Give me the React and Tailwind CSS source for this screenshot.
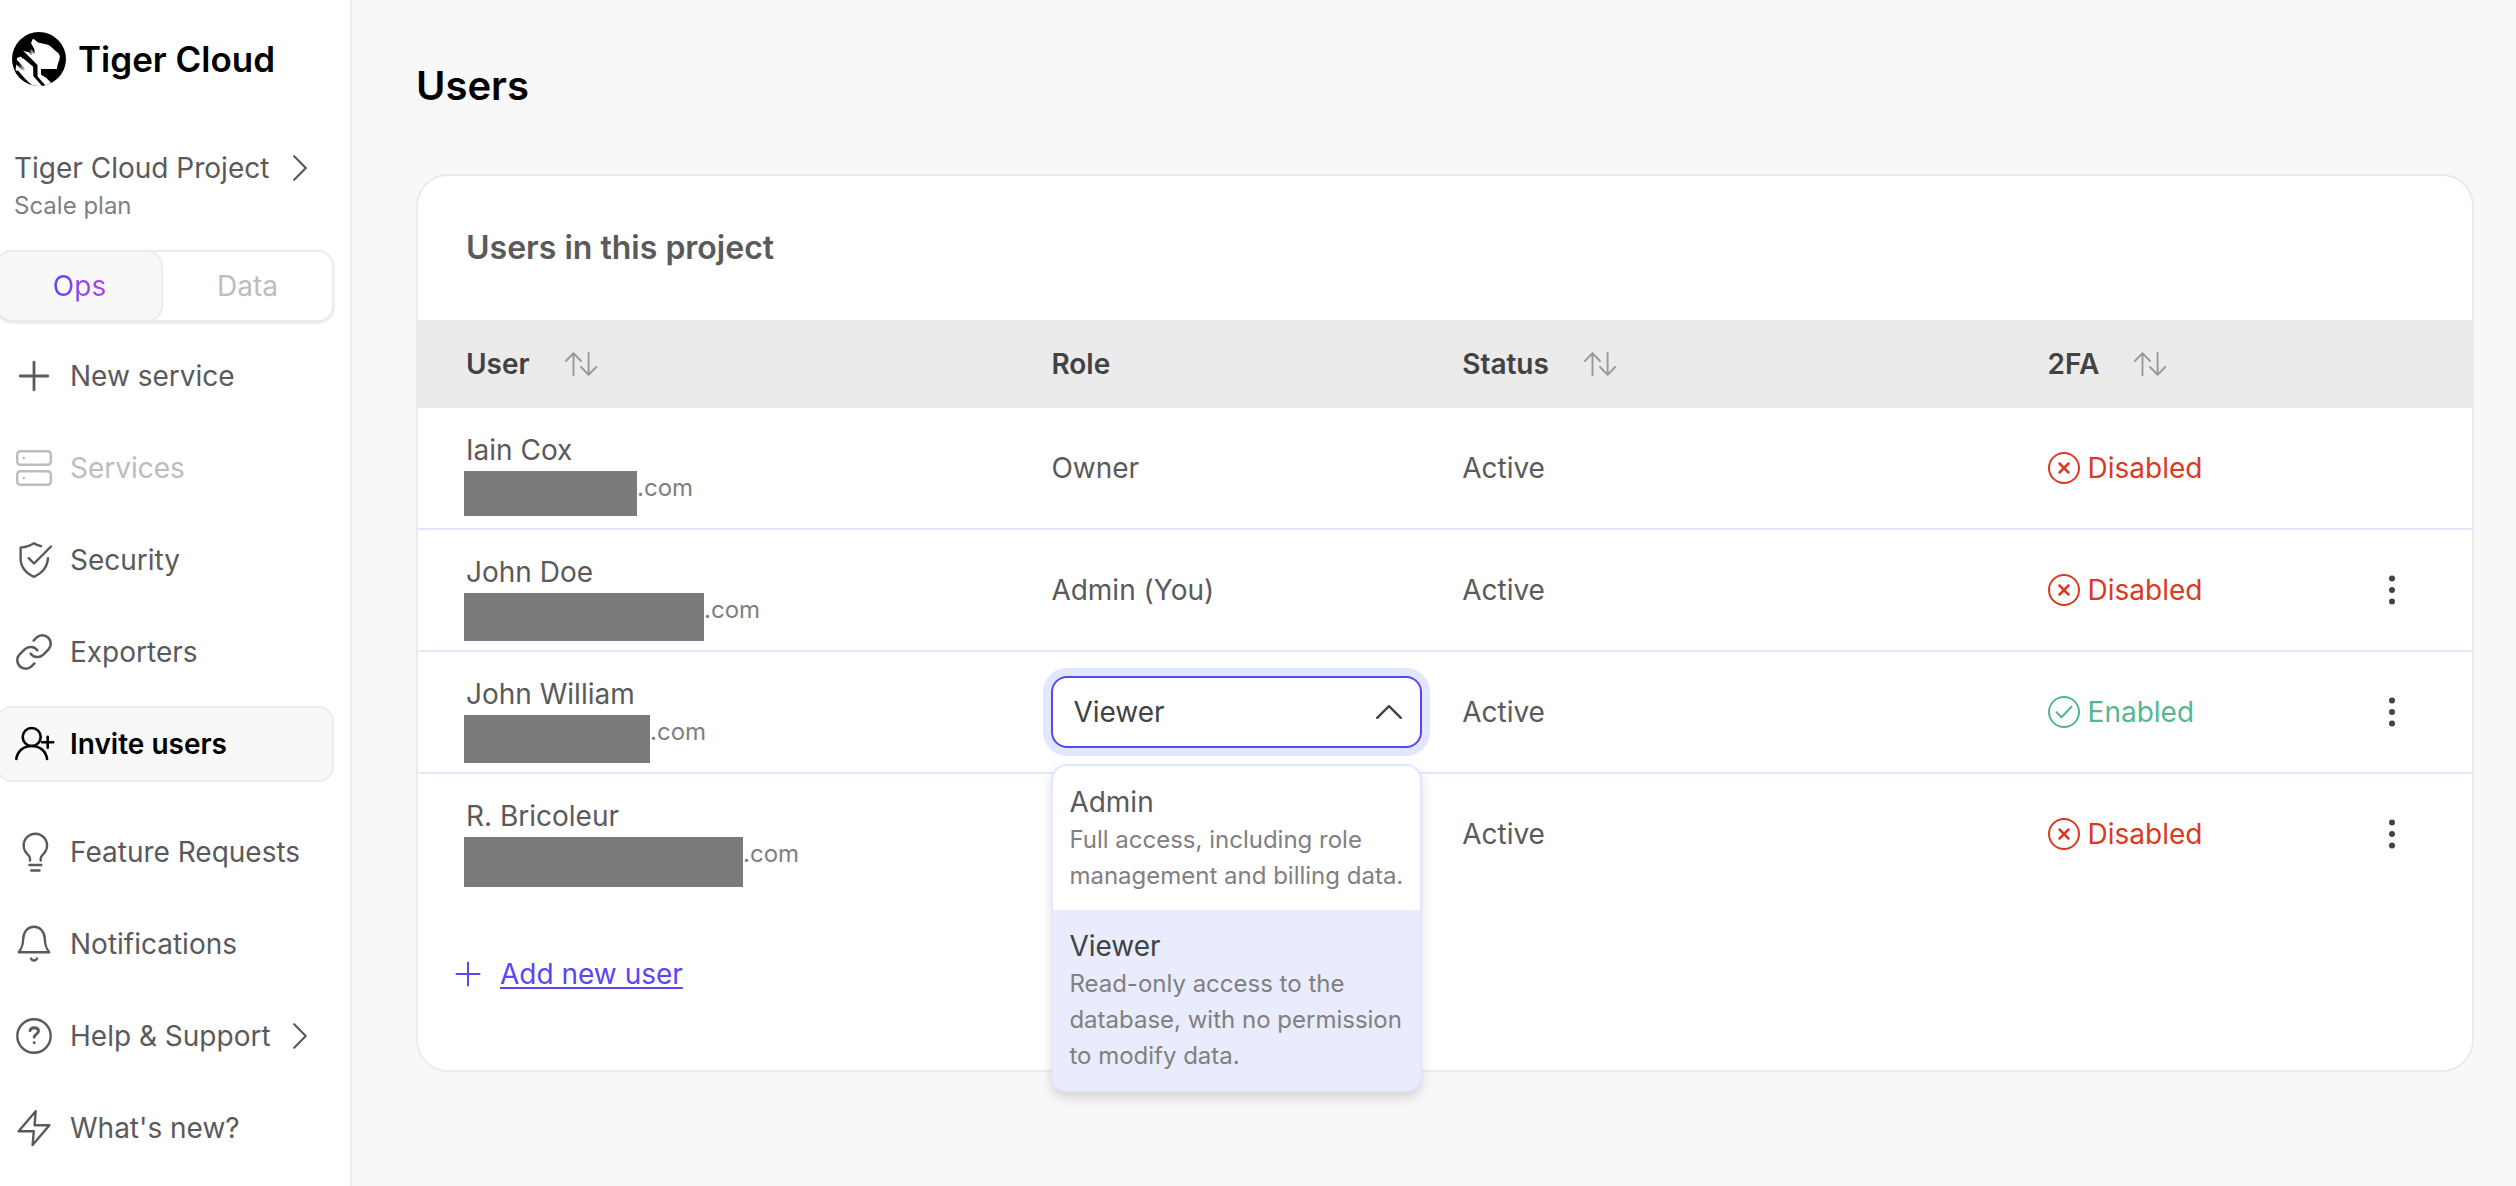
import React, { useState } from 'react';

/* ---------- icons ---------- */

const Icon = ({ children, className = 'size-9', viewBox = '0 0 36 36', strokeWidth = 2.4 }) => (
  <svg
    viewBox={viewBox}
    className={`${className} shrink-0 overflow-visible`}
    fill="none"
    stroke="currentColor"
    strokeWidth={strokeWidth}
    strokeLinecap="round"
    strokeLinejoin="round"
    aria-hidden="true"
  >
    {children}
  </svg>
);

const TigerLogo = () => (
  <svg viewBox="0 0 54 54" className="size-[54px] shrink-0" aria-hidden="true">
    <defs>
      <clipPath id="logo-clip">
        <circle cx="27" cy="27" r="27" />
      </clipPath>
      <linearGradient id="logo-fade" x1="0" y1="0" x2="1" y2="0.3">
        <stop offset="0.3" stopColor="#000" />
        <stop offset="1" stopColor="#fff" />
      </linearGradient>
    </defs>
    <g clipPath="url(#logo-clip)">
      <rect width="54" height="54" fill="#000" />
      {/* head */}
      <path d="M21 6.5L26 10.5L36 12.8C39 14 41 17 43 18.5C46 20.5 47.5 22 47.8 24.5C48 28 45.5 30.5 45 37H29V42.5C30.5 44.5 32.5 44 34.5 46L41 53L33 56L25.5 46.5V33L11 18.5L15 20C17 20 18 19 19.5 19L22.5 22V17.5L19 11Z" fill="#fff" />
      {/* neck and paws */}
      <path d="M5 26L9 24.5L21.5 35L22 44L32 56H20L4 40C3 36 5 34 5 26Z" fill="#fff" />
      <path d="M15 18.5L19.5 17L22.6 22.5L19 23Z" fill="url(#logo-fade)" />
      <path d="M4 32L5 28L15 38.5L14 41L9 37Z" fill="url(#logo-fade)" />
      <path d="M9 22L11 24.8L14 24.5L21.5 32L22.7 34V43.5L32.5 54.5" fill="none" stroke="#000" strokeWidth="2.8" />
      <path d="M2 39L6 38.5C10 43.5 15 49 21 54H10Z" fill="#000" />
    </g>
  </svg>
);

const PlusIcon = () => (
  <Icon strokeWidth={2.8}>
    <path d="M18 4.2v27.6M4.2 18h27.6" />
  </Icon>
);

const ServicesIcon = () => (
  <Icon>
    <rect x="1.2" y="1.2" width="33.6" height="13.6" rx="3" />
    <rect x="1.2" y="21.2" width="33.6" height="13.6" rx="3" />
    <path d="M7.6 8h.2M7.6 28h.2" />
  </Icon>
);

const ShieldIcon = () => (
  <Icon>
    <path d="M25 4.2C22.5 3.5 20 2.6 18 1.2C14 3.8 9.5 5 4.6 5.6V16C4.6 24.5 9.5 31 18 34.8C26.5 31 31.5 25 32 16.3" />
    <path d="M12.7 16.2L18 21.5L35 4.5" />
  </Icon>
);

const LinkIcon = () => (
  <Icon viewBox="1.3 1.3 21.4 21.4" strokeWidth={1.5}>
    <path d="M10 13a5 5 0 0 0 7.54.54l3-3a5 5 0 0 0-7.07-7.07l-1.72 1.71" />
    <path d="M14 11a5 5 0 0 0-7.54-.54l-3 3a5 5 0 0 0 7.07 7.07l1.71-1.71" />
  </Icon>
);

const InviteIcon = () => (
  <Icon strokeWidth={2.6}>
    <circle cx="15.7" cy="11" r="9" />
    <path d="M.3 33C1.5 25 7.5 20 15.7 20S29.9 25 31.1 33M31.7 10.7v11M26.2 16.2h11" />
  </Icon>
);

const BulbIcon = () => (
  <Icon>
    <path d="M14 26.5V24.5C14 22.5 12.8 21.3 11.2 19.8A11.7 11.7 0 1 1 27.5 19.8C25.9 21.3 24.7 22.5 24.7 24.5V26.5M13.4 31h11.9M15.2 36.5h8.3" />
  </Icon>
);

const BellIcon = () => (
  <Icon>
    <path d="M2.8 26.2C5.5 22.5 7 20 7.2 12.8C7.5 5.5 12 .8 18 .8S28.5 5.5 28.8 12.8C29 20 30.5 22.5 33.2 26.2ZM15 32.6C16.5 35.2 19.5 35.2 21 32.6" />
  </Icon>
);

const HelpIcon = () => (
  <Icon>
    <circle cx="18" cy="18" r="16.7" />
    <path d="M14 12.6C14.6 10.7 16 9.7 18 9.7C20.8 9.7 22.5 11.2 22.5 13.2C22.5 16 18.2 16.2 18.2 19.2M18.2 24.6v.2" strokeWidth="2.9" />
  </Icon>
);

const ZapIcon = () => (
  <Icon>
    <path d="M19.7 1.2L2.6 21.3H17.8L16.6 35L33.4 15.2H18.6Z" />
  </Icon>
);

const ChevronRight = () => (
  <Icon className="h-[26px] w-3.5" viewBox="0 0 14 26" strokeWidth={2.2}>
    <path d="M1.2 1.2L12.8 13L1.2 24.8" />
  </Icon>
);

const SortIcon = () => (
  <Icon className="h-6 w-8 text-[#999999]" viewBox="0 0 32 24" strokeWidth={1.9}>
    <path d="M.9 9L8.5 1.2L16 9M8.5 1.2V23.3M16 15L23.6 22.8L31.2 15M23.6 22.8V.9" />
  </Icon>
);

const CrossCircle = () => (
  <Icon className="size-8" viewBox="0 0 32 32" strokeWidth={2}>
    <circle cx="16" cy="16" r="15" />
    <path d="M11.5 11.5l9 9M20.5 11.5l-9 9" strokeWidth="2.5" />
  </Icon>
);

const CheckCircle = () => (
  <Icon className="size-8" viewBox="0 0 32 32" strokeWidth={2}>
    <circle cx="16" cy="16" r="15" />
    <path d="M8.5 16.3L13.5 21.3L23.5 10.8" />
  </Icon>
);

const DotsIcon = () => (
  <svg viewBox="0 0 32 32" className="size-8" fill="#424242" aria-hidden="true">
    <circle cx="16" cy="4.6" r="3" />
    <circle cx="16" cy="16" r="3" />
    <circle cx="16" cy="27.4" r="3" />
  </svg>
);

/* ---------- data ---------- */

const mainNav = [
  { label: 'New service', icon: PlusIcon },
  { label: 'Services', icon: ServicesIcon, disabled: true },
  { label: 'Security', icon: ShieldIcon },
  { label: 'Exporters', icon: LinkIcon },
  { label: 'Invite users', icon: InviteIcon, active: true },
];

const footerNav = [
  { label: 'Feature Requests', icon: BulbIcon },
  { label: 'Notifications', icon: BellIcon },
  { label: 'Help & Support', icon: HelpIcon, expandable: true },
  { label: "What's new?", icon: ZapIcon },
];

const users = [
  { name: 'Iain Cox', mask: 'w-[173px] h-[45px]', role: 'Owner', status: 'Active', twoFactor: false },
  { name: 'John Doe', mask: 'w-[240px] h-12', role: 'Admin (You)', status: 'Active', twoFactor: false, menu: true },
  { name: 'John William', mask: 'w-[186px] h-12', role: 'Viewer', status: 'Active', twoFactor: true, menu: true, editing: true },
  { name: 'R. Bricoleur', mask: 'w-[279px] h-[50px]', role: '', status: 'Active', twoFactor: false, menu: true },
];

const roles = [
  { name: 'Admin', description: 'Full access, including role management and billing data.' },
  { name: 'Viewer', description: 'Read-only access to the database, with no permission to modify data.' },
];

/* ---------- components ---------- */

const NavItem = ({ item }) => {
  const ItemIcon = item.icon;
  const tone = item.active
    ? 'border-[#ebebeb] bg-[#f8f8f8] font-semibold text-black'
    : item.disabled
      ? 'border-transparent text-[#bdbdbd]'
      : 'border-transparent text-[#5a5a5a]';

  return (
    <a href="#" className={`flex h-[76px] items-center rounded-2xl border-2 pl-[18px] pr-[25px] ${tone}`}>
      <ItemIcon />
      <span className="ml-[18px] flex-1 whitespace-nowrap">{item.label}</span>
      {item.expandable && <ChevronRight />}
    </a>
  );
};

const Sidebar = () => (
  <aside className="flex w-[352px] shrink-0 flex-col border-r-2 border-[#ebebeb] bg-white pt-8">
    <div className="flex items-center gap-3 pl-3">
      <TigerLogo />
      <span className="text-[35px] font-semibold text-black">Tiger Cloud</span>
    </div>

    <a href="#" className="mt-[62px] block pl-3.5 pr-[43px]">
      <span className="flex h-10 items-center justify-between">
        Tiger Cloud Project
        <ChevronRight />
      </span>
      <span className="block text-2xl leading-9 text-[#808080]">Scale plan</span>
    </a>

    <div className="-ml-1 mr-4 mt-[26px] flex h-[72px] rounded-2xl border-2 border-[#ebebeb] bg-white shadow-sm" role="tablist">
      <button role="tab" aria-selected="true" className="-my-0.5 -ml-0.5 w-1/2 rounded-2xl border-2 border-[#ebebeb] bg-[#f8f8f8]">
        <span className="bg-linear-to-r from-[#5b45f5] to-[#b040e8] bg-clip-text text-transparent">Ops</span>
      </button>
      <button role="tab" aria-selected="false" className="flex-1 text-[#bdbdbd]">Data</button>
    </div>

    <nav className="-ml-1 mr-4 mt-4 flex flex-col gap-4 pb-5">
      {mainNav.map((item) => <NavItem key={item.label} item={item} />)}
      <div className="mt-4 flex flex-col gap-4">
        {footerNav.map((item) => <NavItem key={item.label} item={item} />)}
      </div>
    </nav>
  </aside>
);

const RoleSelect = ({ value, onChange }) => (
  <div className="relative -mr-2">
    <select
      aria-label="Role"
      value={value}
      onChange={(e) => onChange(e.target.value)}
      className="block h-[72px] w-full appearance-none rounded-2xl border-2 border-[#5b45f5] bg-white px-5 text-[#424242] shadow-[0_0_0_8px_#e0e7ff] outline-none"
    >
      {roles.map((r) => <option key={r.name}>{r.name}</option>)}
    </select>
    <div className="pointer-events-none absolute inset-y-0 right-5 flex items-center text-[#424242]">
      <Icon className="h-3.5 w-[26px]" viewBox="0 0 26 14">
        <path d="M1.2 12.8L13 1.2L24.8 12.8" />
      </Icon>
    </div>

    <ul role="listbox" aria-label="Roles" className="absolute inset-x-0 top-[88px] z-10 overflow-hidden rounded-2xl border-2 border-[#e0e7ff] bg-white shadow-[0_6px_12px_rgba(0,0,0,0.14)]">
      {roles.map((r) => (
        <li
          key={r.name}
          role="option"
          aria-selected={r.name === value}
          onClick={() => onChange(r.name)}
          className={`p-4 ${r.name === value ? 'bg-[#e9ecfc] text-[#424242]' : ''}`}
        >
          <p className="leading-10">{r.name}</p>
          <p className="text-2xl leading-9 text-[#808080]">{r.description}</p>
        </li>
      ))}
    </ul>
  </div>
);

const SortableHeader = ({ label }) => (
  <div className="flex items-center gap-[35px]">
    {label}
    <button aria-label={`Sort by ${label}`}><SortIcon /></button>
  </div>
);

const UserRow = ({ user, role, onRoleChange }) => (
  <tr className="h-[122px] last:h-[120px] *:border-b-2 *:border-[#e0e7ff] last:*:border-b-0">
    <td className="pl-12">
      <p className="h-10 leading-10">{user.name}</p>
      <div className="-ml-0.5 flex h-9 items-start text-2xl leading-9 text-[#808080]">
        <span className={`mt-px shrink-0 bg-[#7a7a7a] ${user.mask}`} />
        .com
      </div>
    </td>
    <td className="pl-12">
      {user.editing ? <RoleSelect value={role} onChange={onRoleChange} /> : user.role}
    </td>
    <td className="pl-12">{user.status}</td>
    <td className="pl-12">
      <span className={`flex items-center gap-2 ${user.twoFactor ? 'text-[#53b78f]' : 'text-[#d93a22]'}`}>
        {user.twoFactor ? <CheckCircle /> : <CrossCircle />}
        {user.twoFactor ? 'Enabled' : 'Disabled'}
      </span>
    </td>
    <td>
      {user.menu && (
        <button aria-label={`Actions for ${user.name}`} className="mx-auto block"><DotsIcon /></button>
      )}
    </td>
  </tr>
);

const App = () => {
  const [role, setRole] = useState('Viewer');

  return (
    <div className="flex min-h-screen overflow-hidden bg-[#f8f8f8] font-['Inter',sans-serif] text-[28px] leading-10 text-[#5a5a5a]">
      <Sidebar />

      <main className="min-w-0 flex-1 pl-16 pr-[42px] pt-[62px]">
        <h1 className="text-[40px] font-semibold leading-[48px] text-black">Users</h1>

        <section className="mt-16 rounded-[32px] border-2 border-[#ebebeb] bg-white">
          <h2 className="flex h-36 items-center px-12 text-[32px] font-semibold">Users in this project</h2>

          <table className="w-full table-fixed border-separate border-spacing-0">
            <thead>
              <tr className="h-[88px] bg-[#ebebeb] text-left text-[#424242]">
                <th className="w-[28.5%] pl-12 font-semibold"><SortableHeader label="User" /></th>
                <th className="w-[20%] pl-12 font-semibold">Role</th>
                <th className="w-[28.5%] pl-12 font-semibold"><SortableHeader label="Status" /></th>
                <th className="w-[15.2%] pl-12 font-semibold"><SortableHeader label="2FA" /></th>
                <th aria-label="Actions" />
              </tr>
            </thead>
            <tbody>
              {users.map((user) => (
                <UserRow key={user.name} user={user} role={role} onRoleChange={setRole} />
              ))}
            </tbody>
          </table>

          <div className="flex items-center gap-5 pb-[76px] pl-[38px] pt-[60px] text-[#5b45f5]">
            <Icon className="size-6" viewBox="0 0 24 24" strokeWidth={2}>
              <path d="M12 .5v23M.5 12h23" />
            </Icon>
            <a href="#" className="underline decoration-2 underline-offset-3">Add new user</a>
          </div>
        </section>
      </main>
    </div>
  );
};

export default App;
